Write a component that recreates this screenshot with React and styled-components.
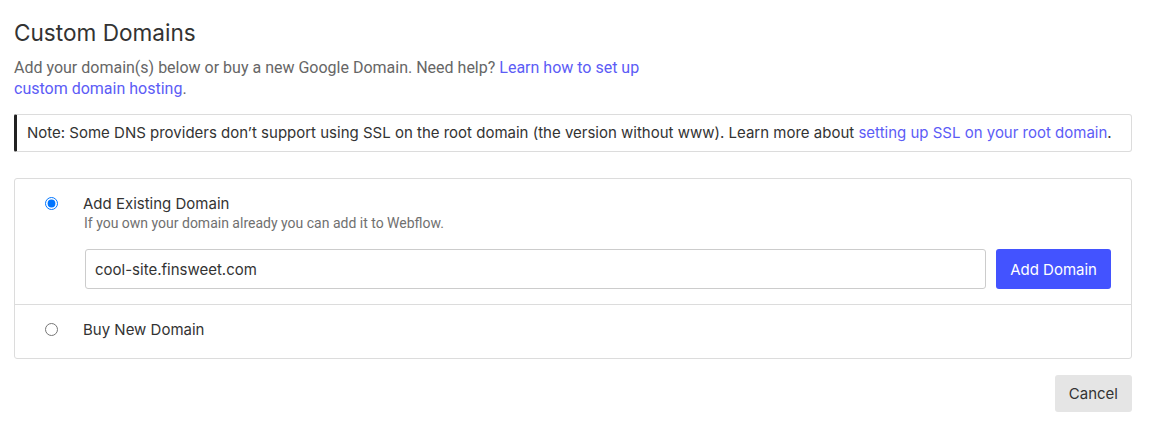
import React, { useState } from "react";
import styled, { createGlobalStyle } from "styled-components";

const GlobalStyle = createGlobalStyle`
  body {
    margin: 0;
    background: #ffffff;
    font-family: Inter, "Liberation Sans", sans-serif;
    color: #333333;
  }
`;

const Page = styled.div`
  padding: 19px 18px 13px 14px;
`;

const Title = styled.h1`
  margin: 0;
  font-family: Inter, sans-serif;
  font-size: 22.6px;
  font-weight: 400;
  line-height: 28px;
  color: #333333;
`;

const Intro = styled.p`
  margin: 10px 0 0;
  max-width: 660px;
  font-family: Roboto, sans-serif;
  font-size: 16px;
  line-height: 21px;
  color: #666666;
`;

const Link = styled.a`
  color: #5c5cf6;
  text-decoration: none;
`;

const Note = styled.div`
  margin-top: 15px;
  padding: 8px 10px;
  border: 1px solid #dcdcdc;
  border-left: 3px solid #222222;
  border-radius: 2px 3px 3px 2px;
  font-size: 15px;
  line-height: 20px;
  color: #333333;
`;

const Panel = styled.div`
  margin-top: 26px;
  border: 1px solid #dcdcdc;
  border-radius: 3px;
`;

const Option = styled.label`
  display: flex;
  align-items: flex-start;
  gap: 25px;
  padding: 15px 20px ${(p) => p.$bottom}px 30px;
  cursor: pointer;
  & + & {
    border-top: 1px solid #dcdcdc;
  }
`;

const Radio = styled.input.attrs({ type: "radio" })`
  flex: none;
  width: 13px;
  height: 13px;
  margin: 3px 0 0;
  accent-color: #0075ff;
`;

const Body = styled.div`
  flex: 1;
  display: flex;
  flex-direction: column;
`;

const OptionTitle = styled.span`
  font-size: 15px;
  line-height: 20px;
  color: #333333;
`;

const Hint = styled.span`
  margin-left: 1px;
  font-family: Roboto, sans-serif;
  font-size: 14px;
  line-height: 18px;
  color: #707070;
`;

const FieldRow = styled.div`
  display: flex;
  gap: 10px;
  margin: 17px 0 0 2px;
`;

const TextInput = styled.input`
  flex: 1;
  height: 40px;
  box-sizing: border-box;
  padding: 0 9px;
  border: 1px solid #cccccc;
  border-radius: 3px;
  font-family: Inter, sans-serif;
  font-size: 15px;
  color: #333333;
  outline: none;
`;

const Button = styled.button`
  height: ${(p) => p.$height}px;
  padding: 0 14px;
  border: none;
  border-radius: 3px;
  background: ${(p) => (p.$primary ? "#4353ff" : "#e5e5e5")};
  color: ${(p) => (p.$primary ? "#ffffff" : "#333333")};
  font-family: Inter, sans-serif;
  font-size: 15px;
  cursor: pointer;
`;

const Footer = styled.div`
  display: flex;
  justify-content: flex-end;
  margin-top: 16px;
`;

export default function App() {
  const [choice, setChoice] = useState("existing");
  const [domain, setDomain] = useState("cool-site.finsweet.com");

  return (
    <Page>
      <GlobalStyle />
      <Title>Custom Domains</Title>
      <Intro>
        Add your domain(s) below or buy a new Google Domain. Need help?{" "}
        <Link href="#">Learn how to set up custom domain hosting</Link>.
      </Intro>
      <Note>
        Note: Some DNS providers don’t support using SSL on the root domain (the version
        without www). Learn more about{" "}
        <Link href="#">setting up SSL on your root domain</Link>.
      </Note>
      <Panel>
        <Option $bottom={15}>
          <Radio
            name="domain"
            checked={choice === "existing"}
            onChange={() => setChoice("existing")}
          />
          <Body>
            <OptionTitle>Add Existing Domain</OptionTitle>
            <Hint>If you own your domain already you can add it to Webflow.</Hint>
            <FieldRow>
              <TextInput value={domain} onChange={(e) => setDomain(e.target.value)} />
              <Button $primary $height={40}>
                Add Domain
              </Button>
            </FieldRow>
          </Body>
        </Option>
        <Option $bottom={18}>
          <Radio name="domain" checked={choice === "buy"} onChange={() => setChoice("buy")} />
          <Body>
            <OptionTitle>Buy New Domain</OptionTitle>
          </Body>
        </Option>
      </Panel>
      <Footer>
        <Button $height={37}>Cancel</Button>
      </Footer>
    </Page>
  );
}
